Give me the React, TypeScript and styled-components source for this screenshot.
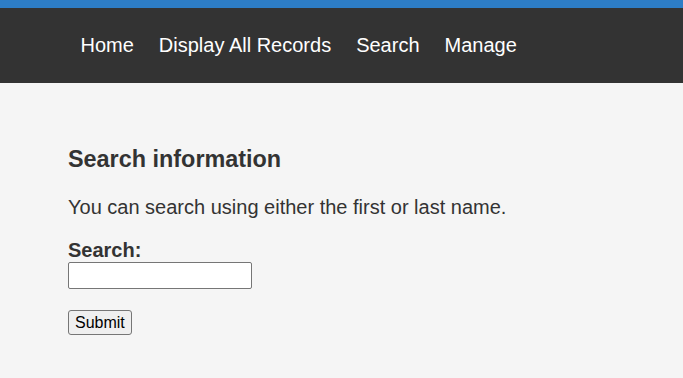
import React from 'react';
import styled, {createGlobalStyle} from "styled-components";

const GlobalStyle = createGlobalStyle`
    html, body {
        margin: 0;
        padding: 0;
        background: #f5f5f5;
    }
    body {
        font-family: "Liberation Sans", Arial, sans-serif;
        font-size: 20px;
        color: #333;
    }
`

const navItems = ['Home', 'Display All Records', 'Search', 'Manage']

export default function App() {
    return (
        <>
            <GlobalStyle/>
            <TopStripe/>
            <StyledNav>
                <NavList>
                    {navItems.map(item => (
                        <NavItem key={item}><NavLink href="#">{item}</NavLink></NavItem>
                    ))}
                </NavList>
            </StyledNav>
            <Main>
                <Title>Search information</Title>
                <Text>You can search using either the first or last name.</Text>
                <SearchForm onSubmit={e => e.preventDefault()}>
                    <Label htmlFor="search">Search:</Label>
                    <TextInput id="search" type="text"/>
                    <SubmitButton type="submit">Submit</SubmitButton>
                </SearchForm>
            </Main>
        </>
    );
}

const TopStripe = styled.div`
    height: 8px;
    background: #2d7dc6;
`

const StyledNav = styled.nav`
    height: 75px;
    background: #333;
    display: flex;
    align-items: center;
    padding: 0 68px;
`

const NavList = styled.ul`
    display: flex;
    list-style: none;
    margin: 0;
    padding: 0;
`

const NavItem = styled.li`
    margin: 0;
`

const NavLink = styled.a`
    display: block;
    padding: 0 12.5px;
    color: #fff;
    text-decoration: none;
    font-size: 20px;
    line-height: 23px;
`

const Main = styled.main`
    padding: 40px 68px;
`

const Title = styled.h3`
    font-size: 23.4px;
    font-weight: 700;
    margin: 23.4px 0 23px;
`

const Text = styled.p`
    margin: 0 0 20px;
`

const SearchForm = styled.form`
    display: flex;
    flex-direction: column;
    align-items: flex-start;
`

const Label = styled.label`
    font-weight: 700;
    line-height: 23px;
`

const TextInput = styled.input`
    box-sizing: border-box;
    width: 184px;
    height: 27px;
    margin: 0;
    border: 1px solid #767676;
    border-radius: 2px;
    background: #fff;
    font-size: 16px;
`

const SubmitButton = styled.button`
    box-sizing: border-box;
    margin-top: 21px;
    height: 25px;
    padding: 1px 6px;
    border: 1px solid #767676;
    border-radius: 3px;
    background: #efefef;
    color: #000;
    font-family: "Liberation Sans", Arial, sans-serif;
    font-size: 16px;
`
